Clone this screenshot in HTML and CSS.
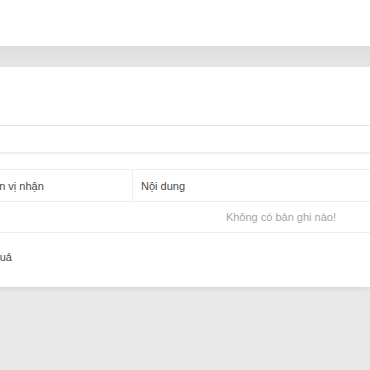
FILE: index.html
```html
<!DOCTYPE html>
<html lang="vi">
<head>
  <meta charset="UTF-8" />
  <title>Văn bản đến</title>
  <link rel="stylesheet" href="styles.css">
</head>
<body>
  <div class="topbar"></div>

  <div class="main">
    <div class="panel">
      <div class="filter"></div>
      <div class="toolbar"></div>

      <table class="grid">
        <thead>
          <tr>
            <th class="col-unit">Đơn vị nhận</th>
            <th class="col-content">Nội dung</th>
          </tr>
        </thead>
        <tbody>
          <tr>
            <td colspan="2" class="empty">Không có bản ghi nào!</td>
          </tr>
        </tbody>
      </table>

      <div class="footer">Kết quả</div>
    </div>
  </div>
</body>
</html>
```

FILE: styles.css
```css
body { margin: 0; font-family: "Liberation Sans", Arial, sans-serif; font-size: 11px; color: #606266; background: #e8e8e8; }
.topbar { height: 46px; background: #fff; }
.main { padding-top: 21px; height: 303px; background: linear-gradient(#dddddd, #e6e6e6 21px, #e8e8e8 240px); }
.panel { background: #fff; margin-left: -40px; height: 220px; box-shadow: 0 2px 5px rgba(0, 0, 0, 0.08); }
.filter { height: 58px; border-bottom: 1px solid #e4e4e4; }
.toolbar { height: 26px; border-bottom: 2px solid #efefef; margin-bottom: 15px; }
.grid { width: 100%; border-collapse: collapse; }
.grid th, .grid td { border-top: 1px solid #ebeef5; border-bottom: 1px solid #ebeef5; padding: 0 10px; text-align: left; }
.grid th { height: 31px; font-weight: normal; color: #4a4a4a; }
.grid th.col-unit { width: 138px; border-right: 1px solid #ebeef5; padding-left: 24px; }
.grid th.col-content { padding-left: 8px; }
.grid td { height: 30px; }
.grid td.empty { text-align: right; padding-right: 34px; color: #a5a5a5; }
.footer { padding: 18px 0 0 14px; color: #4a4a4a; }
```
